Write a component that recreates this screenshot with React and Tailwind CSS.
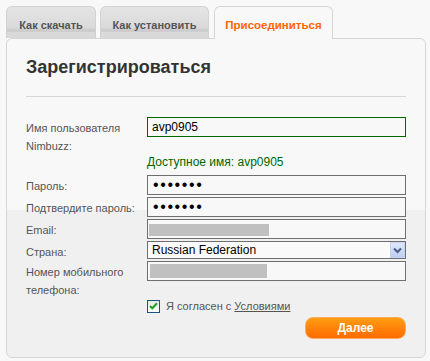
import React from "react";

const lbl = "w-[121px] shrink-0 pt-[2px] leading-[18px] text-[11px] text-[#555]";
const box = "w-[259px] h-[20px] border border-[#6f6f6f] bg-[#f8f8f8] flex items-center";

function Dots() {
  return (
    <span className="pl-[5px] text-[16px] leading-[16px] tracking-[1.6px] text-black font-['Liberation_Sans',Arial,sans-serif]">
      •••••••
    </span>
  );
}

export default function App() {
  return (
    <div className="w-[430px] h-[361px] bg-[#f8f8f8] pt-[6px] pl-[6px] font-['Liberation_Sans',Arial,sans-serif]">
      {/* Tabs */}
      <div className="flex items-end h-[32px]">
        <div className="w-[90px] h-[32px] rounded-t-[6px] border border-b-0 border-[#d2d2d2] bg-[linear-gradient(to_bottom,#e4e4e4_0px,#dadada_21px,#cdcdcd_22px,#cdcdcd_25px,#d9d9d9_25px)] flex justify-center pt-[11px] text-[11px] leading-[14px] font-bold text-[#555]">
          Как скачать
        </div>
        <div className="ml-[4px] w-[109px] h-[32px] rounded-t-[6px] border border-b-0 border-[#d2d2d2] bg-[linear-gradient(to_bottom,#e4e4e4_0px,#dadada_21px,#cdcdcd_22px,#cdcdcd_25px,#d9d9d9_25px)] flex justify-center pt-[11px] text-[11px] leading-[14px] font-bold text-[#555]">
          Как установить
        </div>
        <div className="ml-[5px] w-[119px] h-[33px] -mb-px relative z-10 rounded-t-[6px] border border-b-0 border-[#d6d6d6] bg-[#f8f8f8] flex justify-center pt-[11px] text-[11.5px] leading-[14px] font-bold text-[#ff6600]">
          Присоединиться
        </div>
      </div>

      {/* Panel */}
      <div className="w-[420px] h-[320px] border border-[#d6d6d6] rounded-[6px] bg-[linear-gradient(to_bottom,#f8f8f8_171px,#f0f0f0_171px)] pt-[17px] px-[19px]">
        <h1 className="text-[18px] leading-[22px] font-bold text-[#333]">Зарегистрироваться</h1>
        <div className="mt-[18px] h-px bg-[#d8d8d8]" />

        <div className="mt-[20px] flex flex-col">
          {/* Username */}
          <div className="flex">
            <div className={lbl}>
              Имя пользователя
              <br />
              Nimbuzz:
            </div>
            <div className="w-[259px] h-[20px] border border-[#006400] bg-[#f8f8f8] flex items-center pl-[4px] text-[12px] text-black">
              avp0905
            </div>
          </div>
          <div className="ml-[121px] text-[12px] leading-[14px] text-[#006600]">Доступное имя: avp0905</div>

          {/* Password */}
          <div className="mt-[6px] flex">
            <div className={lbl}>Пароль:</div>
            <div className={box}>
              <Dots />
            </div>
          </div>
          <div className="mt-[2px] flex">
            <div className={lbl}>Подтвердите пароль:</div>
            <div className={box}>
              <Dots />
            </div>
          </div>
          <div className="mt-[2px] flex">
            <div className={lbl}>Email:</div>
            <div className="w-[259px] h-[20px] border border-[#6f6f6f] bg-[#f8f8f8] pl-[1px] pt-[4px]">
              <div className="w-[120px] h-[12px] bg-[#c0c0c0]" />
            </div>
          </div>
          <div className="mt-[2px] flex">
            <div className={lbl}>Страна:</div>
            <div className="w-[259px] h-[18px] border border-[#6f6f6f] bg-[#fafafa] flex items-center justify-between">
              <span className="pl-[4px] text-[12px] text-black leading-[14px]">Russian Federation</span>
              <div className="w-[15px] h-[16px] border border-[#c5d3f0] bg-[linear-gradient(to_bottom,#dfe8fb,#bccff5)] flex items-center justify-center">
                <svg width="9" height="7" viewBox="0 0 9 7">
                  <path d="M1 1.5 L4.5 5 L8 1.5" fill="none" stroke="#4a5b82" strokeWidth="2" />
                </svg>
              </div>
            </div>
          </div>
          <div className="flex">
            <div className={lbl}>
              Номер мобильного
              <br />
              телефона:
            </div>
            <div className="w-[259px] h-[20px] border border-[#6f6f6f] bg-[#f8f8f8] pl-[2px] pt-[2px]">
              <div className="w-[117px] h-[14px] bg-[#c0c0c0]" />
            </div>
          </div>

          {/* Agreement */}
          <div className="ml-[121px] flex items-center h-[14px] gap-[6px]">
            <div className="w-[13px] h-[13px] border border-[#1c5180] bg-[linear-gradient(to_bottom,#e6e6e6,#ffffff)] flex items-center justify-center">
              <svg width="9" height="8" viewBox="0 0 9 8">
                <path d="M1 4 L3.3 6.3 L8 1.2" fill="none" stroke="#21a121" strokeWidth="2" />
              </svg>
            </div>
            <span className="text-[11px] leading-[14px] text-[#555]">
              Я согласен с <span className="underline">Условиями</span>
            </span>
          </div>

          <div className="mt-[4px] flex justify-end">
            <div className="w-[101px] h-[22px] rounded-[8px] border border-[#ffab5c] bg-[linear-gradient(to_bottom,#ff9d12,#ff6b00)] flex items-center justify-center text-[12px] font-bold text-white">
              Далее
            </div>
          </div>
        </div>
      </div>
    </div>
  );
}
